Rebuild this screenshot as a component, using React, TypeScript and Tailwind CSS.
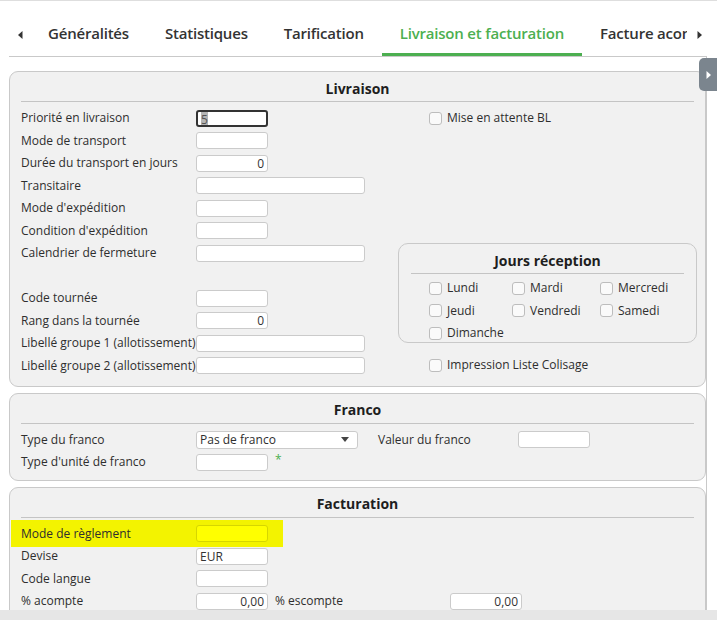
import React from "react";

const FONT = "font-['Open_Sans','Liberation_Sans',sans-serif]";

function Input({ w = 72, value = "", right = false, focused = false, yellow = false }: { w?: number; value?: string; right?: boolean; focused?: boolean; yellow?: boolean }) {
  const base = "h-[17px] rounded-[3px] px-[3px] text-[12px] leading-[15px] text-[#333] overflow-hidden whitespace-nowrap";
  const border = focused
    ? "border-2 border-[#333] leading-[13px] bg-white"
    : yellow
    ? "border border-[#d6d600] bg-[#ffff00]"
    : "border border-[#cbcbcb] bg-white";
  return (
    <div className={`${base} ${border} ${right ? "text-right" : "text-left"}`} style={{ width: w }}>
      {focused ? <span className="bg-[#b5b5b5] text-[#555]">{value}</span> : value}
    </div>
  );
}

function Row({ label, children }: { label?: string; children?: React.ReactNode }) {
  return (
    <div className="flex h-[22.5px] items-center">
      <div className="w-[175px] shrink-0 whitespace-nowrap">{label}</div>
      {children}
    </div>
  );
}

function Check({ label }: { label: string }) {
  return (
    <div className="flex items-center gap-[5px] whitespace-nowrap">
      <div className="h-[13px] w-[13px] rounded-[3px] border border-[#bdbdbd] bg-[#fafafa]" />
      <span>{label}</span>
    </div>
  );
}

function Section({ title, children, className = "" }: { title: string; children: React.ReactNode; className?: string }) {
  return (
    <div className={`w-[697px] shrink-0 rounded-[9px] border border-[#c9c9c9] bg-[#f1f1f1] px-[11px] ${className}`}>
      <div className="flex h-[30px] items-center justify-center border-b border-[#c4c4c4] pt-[3px] text-[14px] font-bold text-[#1e1e1e]">
        {title}
      </div>
      {children}
    </div>
  );
}

function TriLeft({ color = "#333" }: { color?: string }) {
  return (
    <svg width="5" height="8" viewBox="0 0 5 8">
      <path d="M4.5 0 L0 4 L4.5 8 Z" fill={color} />
    </svg>
  );
}
function TriRight({ color = "#333" }: { color?: string }) {
  return (
    <svg width="5" height="8" viewBox="0 0 5 8">
      <path d="M0.5 0 L5 4 L0.5 8 Z" fill={color} />
    </svg>
  );
}

export default function App() {
  const tabs = ["Généralités", "Statistiques", "Tarification", "Livraison et facturation", "Facture acompte"];
  return (
    <div className={`${FONT} relative flex h-[620px] w-[717px] flex-col overflow-hidden border-t border-[#dedede] bg-white text-[12px] text-[#2e2e2e]`}>
      {/* Tabs header */}
      <div className="ml-[9px] flex h-[56px] w-[698px] shrink-0 border-b border-[#c9c9c9]">
        <div className="flex w-[21px] shrink-0 items-center justify-center pt-[12px] pl-[2px]">
          <TriLeft />
        </div>
        <div className="flex w-[657px] shrink-0 overflow-hidden">
          {tabs.map((t, i) => (
            <div
              key={t}
              className={`flex h-[55px] shrink-0 items-center whitespace-nowrap border-b-[3px] px-[18px] pt-[12px] text-[15px] font-semibold tracking-[-0.2px] ${
                i === 3 ? "border-[#4caf50] text-[#4caf50]" : "border-transparent text-[#333]"
              }`}
            >
              {t}
            </div>
          ))}
        </div>
        <div className="flex flex-1 items-center justify-center pt-[12px] pl-[4px]">
          <TriRight />
        </div>
      </div>

      {/* Content */}
      <div className="ml-[9px] flex w-[698px] flex-1 flex-col gap-[6px] overflow-hidden border-r border-[#c9c9c9] pt-[14px]">
        <Section title="Livraison" className="pb-[9px]">
          <div className="flex pt-[4.75px]">
            <div className="w-[377px] shrink-0">
              <Row label="Priorité en livraison">
                <Input value="5" focused />
              </Row>
              <Row label="Mode de transport">
                <Input />
              </Row>
              <Row label="Durée du transport en jours">
                <Input value="0" right />
              </Row>
              <Row label="Transitaire">
                <Input w={169} />
              </Row>
              <Row label="Mode d'expédition">
                <Input />
              </Row>
              <Row label="Condition d'expédition">
                <Input />
              </Row>
              <Row label="Calendrier de fermeture">
                <Input w={169} />
              </Row>
              <Row />
              <Row label="Code tournée">
                <Input />
              </Row>
              <Row label="Rang dans la tournée">
                <Input value="0" right />
              </Row>
              <Row label="Libellé groupe 1 (allotissement)">
                <Input w={169} />
              </Row>
              <Row label="Libellé groupe 2 (allotissement)">
                <Input w={169} />
              </Row>
            </div>
            <div className="flex w-[299px] shrink-0 flex-col">
              <div className="flex h-[22.5px] items-center pl-[31px]">
                <Check label="Mise en attente BL" />
              </div>
              <div className="mt-[113.75px] h-[100px] rounded-[10px] border border-[#c9c9c9] px-[12px]">
                <div className="flex h-[30px] items-center justify-center border-b border-[#c4c4c4] pt-[3px] text-[14px] font-bold text-[#1e1e1e]">
                  Jours réception
                </div>
                <div className="grid grid-cols-[83px_88px_1fr] pl-[18px] pt-[3px]">
                  {["Lundi", "Mardi", "Mercredi", "Jeudi", "Vendredi", "Samedi", "Dimanche"].map((d) => (
                    <div key={d} className="flex h-[22.5px] items-center">
                      <Check label={d} />
                    </div>
                  ))}
                </div>
              </div>
              <div className="mt-[10.75px] flex h-[22.5px] items-center pl-[31px]">
                <Check label="Impression Liste Colisage" />
              </div>
            </div>
          </div>
        </Section>

        <Section title="Franco" className="pb-[6px]">
          <div className="pt-[4.75px]">
            <Row label="Type du franco">
              <div className="flex h-[18px] w-[162px] items-center justify-between rounded-[3px] border border-[#cbcbcb] bg-white pl-[3px] pr-[8px] leading-[15px]">
                <span>Pas de franco</span>
                <svg width="8" height="5" viewBox="0 0 8 5">
                  <path d="M0 0 L8 0 L4 5 Z" fill="#444" />
                </svg>
              </div>
              <div className="ml-[20px] w-[140px] shrink-0">Valeur du franco</div>
              <Input />
            </Row>
            <Row label="Type d'unité de franco">
              <Input />
              <span className="ml-[7px] -mt-[5px] text-[12px] text-[#4caf50]">*</span>
            </Row>
          </div>
        </Section>

        <Section title="Facturation" className="pb-[20px]">
          <div className="pt-[4.75px]">
            <div className="-my-[2.25px] -ml-[10px] flex h-[27px] w-[272px] items-center bg-[#f3f300] pl-[10px]">
              <div className="w-[175px] shrink-0 whitespace-nowrap">Mode de règlement</div>
              <Input yellow />
            </div>
            <Row label="Devise">
              <Input value="EUR" />
            </Row>
            <Row label="Code langue">
              <Input />
            </Row>
            <Row label="% acompte">
              <Input value="0,00" right />
              <div className="ml-[7px] w-[175px] shrink-0">% escompte</div>
              <Input value="0,00" right />
            </Row>
          </div>
        </Section>
      </div>

      {/* bottom scrollbar band */}
      <div className="h-[10px] shrink-0 bg-[#e6e6e6]" />

      {/* right side handle */}
      <div className="absolute right-0 top-[57px] flex h-[33px] w-[18px] items-center justify-center rounded-l-[5px] bg-[#7b858e]">
        <TriRight color="#ffffff" />
      </div>
    </div>
  );
}
